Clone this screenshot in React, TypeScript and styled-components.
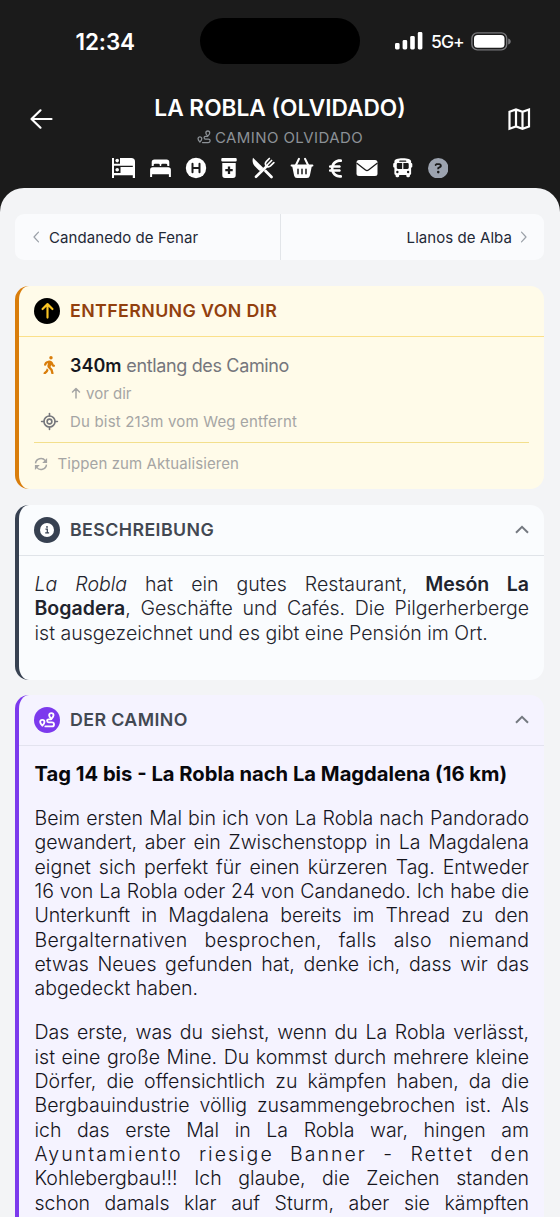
import React from "react";
import styled, { createGlobalStyle } from "styled-components";
import { FaEuroSign, FaBus, FaCircleQuestion, FaPersonWalking } from "react-icons/fa6";
import { LocateFixed } from "lucide-react";

const Global = createGlobalStyle`
  * { box-sizing: border-box; }
  html, body { margin: 0; background: #1b1b1b; overflow: hidden; }
  p, h1, h2, h3 { margin: 0; }
`;

const Screen = styled.div`
  width: 560px;
  height: 1217px;
  overflow: hidden;
  display: flex;
  flex-direction: column;
  background: #1b1b1b;
  font-family: Inter, "Liberation Sans", sans-serif;
  svg { display: block; flex: none; }
`;

const StatusBar = styled.div`
  display: grid;
  grid-template-columns: 200px 160px 200px;
  height: 83px;
  padding-top: 18px;
  color: #fff;
  flex: none;
`;

const Clock = styled.div`
  padding-left: 75.5px;
  height: 47px;
  line-height: 47px;
  font-size: 22.5px;
  font-weight: 580;
  letter-spacing: -0.1px;
`;

const Island = styled.div`
  height: 46px;
  border-radius: 23px;
  background: #000;
`;

const Signals = styled.div`
  display: flex;
  align-items: center;
  height: 46px;
  padding-left: 34px;
`;

const Network = styled.span`
  width: 40px;
  margin-left: 8px;
  font-size: 17.5px;
  font-weight: 500;
  line-height: 20px;
  padding-top: 2px;
  letter-spacing: -0.9px;
  white-space: nowrap;
`;

const Header = styled.header`
  display: grid;
  grid-template-columns: 80px 1fr 80px;
  height: 105px;
  flex: none;
  color: #fff;
`;

const HeaderButton = styled.button<{ $end?: boolean }>`
  display: flex;
  justify-content: ${(p) => (p.$end ? "flex-end" : "flex-start")};
  align-items: center;
  height: 71px;
  padding: 0 ${(p) => (p.$end ? "29px" : "0")} 0 ${(p) => (p.$end ? "0" : "28.5px")};
  border: 0;
  background: none;
  color: #fff;
`;

const Heading = styled.div`
  display: flex;
  flex-direction: column;
  align-items: center;
`;

const Title = styled.h1`
  margin-top: 10px;
  font-size: 22.7px;
  line-height: 30px;
  font-weight: 600;
  white-space: nowrap;
`;

const Subtitle = styled.div`
  display: flex;
  align-items: center;
  gap: 4px;
  margin-top: 5px;
  height: 18px;
  color: #8c9196;
  font-size: 15px;
  letter-spacing: 0.42px;
`;

const Services = styled.div`
  display: flex;
  align-items: center;
  gap: 15px;
  height: 24px;
  margin-top: 10px;
`;

const Service = styled.span<{ $width: number; $muted?: boolean }>`
  display: flex;
  justify-content: center;
  align-items: center;
  width: ${(p) => p.$width}px;
  height: 24px;
  color: ${(p) => (p.$muted ? "#9ca3af" : "#fff")};
`;

const Sheet = styled.main`
  flex: 1;
  min-height: 0;
  overflow: hidden;
  border-radius: 24px 24px 0 0;
  background: #f3f4f6;
  padding: 26px 16px 0 15px;
  display: flex;
  flex-direction: column;
`;

const StageNav = styled.nav`
  display: grid;
  grid-template-columns: 1fr 1fr;
  height: 46px;
  flex: none;
  border-radius: 9px;
  background: #fafbfd;
  overflow: hidden;
`;

const StageLink = styled.a<{ $next?: boolean }>`
  display: flex;
  align-items: center;
  justify-content: ${(p) => (p.$next ? "flex-end" : "flex-start")};
  gap: ${(p) => (p.$next ? "8px" : "9px")};
  padding: 0 ${(p) => (p.$next ? "16px" : "17px")} 0 17px;
  border-left: ${(p) => (p.$next ? "1px solid #e2e5e9" : "0")};
  color: #1f2937;
  font-size: 15px;
  letter-spacing: 0.07px;
  white-space: nowrap;
`;

const Card = styled.section<{ $accent: string; $bg: string; $height: number; $gap: number }>`
  flex: none;
  height: ${(p) => p.$height}px;
  margin-top: ${(p) => p.$gap}px;
  border-left: 4px solid ${(p) => p.$accent};
  border-radius: 14px;
  background: ${(p) => p.$bg};
`;

const CardHeader = styled.header<{ $line: string }>`
  display: flex;
  align-items: center;
  height: 51px;
  padding: 0 14px 1px 15px;
  border-bottom: 1px solid ${(p) => p.$line};
`;

const Badge = styled.span<{ $bg: string }>`
  display: flex;
  align-items: center;
  justify-content: center;
  width: 26px;
  height: 26px;
  border-radius: 50%;
  background: ${(p) => p.$bg};
  color: #fff;
`;

const CardTitle = styled.h2<{ $color?: string }>`
  flex: 1;
  margin-left: 10px;
  color: ${(p) => p.$color ?? "#424852"};
  font-size: 17.8px;
  font-weight: 600;
  letter-spacing: 0.4px;
  line-height: 22px;
  padding-top: 1px;
  white-space: nowrap;
`;

const Distance = styled.div`
  padding: 14px 15px 0;
`;

const Row = styled.div`
  display: grid;
  grid-template-columns: 30px 1fr;
  column-gap: 6px;
  align-items: center;
  justify-items: center;
  height: 28px;
`;

const RowText = styled.div<{ $size: number; $color: string; $track?: number }>`
  grid-column: 2;
  justify-self: start;
  display: flex;
  align-items: center;
  gap: 4px;
  color: ${(p) => p.$color};
  font-size: ${(p) => p.$size}px;
  letter-spacing: ${(p) => p.$track ?? 0}px;
  white-space: pre;
`;

const Strong = styled.strong`
  color: #15171e;
  font-weight: 600;
  letter-spacing: 0;
`;

const Refresh = styled.div`
  display: flex;
  align-items: center;
  gap: 9.5px;
  height: 42px;
  margin-top: 7px;
  border-top: 1px solid #f3df8c;
  color: #a5a5a4;
  font-size: 15px;
  letter-spacing: 0.09px;
`;

const Prose = styled.div<{ $color: string }>`
  padding: 16px 15px 0 15.5px;
  color: ${(p) => p.$color};
  font-size: 19.55px;
  font-weight: 300;
  line-height: 24.37px;
`;

const Line = styled.div<{ $last?: boolean; $track?: number }>`
  white-space: nowrap;
  margin-right: -${(p) => p.$track ?? 0}px;
  letter-spacing: ${(p) => p.$track ?? 0}px;
  text-align: justify;
  text-align-last: ${(p) => (p.$last ? "left" : "justify")};
  strong { font-weight: 640; }
`;

const Paragraph = styled.div`
  margin-top: 19.4px;
`;

const StageTitle = styled.h3`
  color: #08080c;
  font-size: 20.2px;
  font-weight: 680;
  line-height: 24.4px;
  white-space: nowrap;
`;

const Signal = () => (
  <svg width="29" height="18" viewBox="0 0 29 18" fill="#fff">
    <rect x="1" y="11" width="4.6" height="6.5" rx="1.4" />
    <rect x="8.6" y="8" width="4.6" height="9.5" rx="1.4" />
    <rect x="16.2" y="4" width="4.6" height="13.5" rx="1.4" />
    <rect x="23.8" y="0" width="4.6" height="17.5" rx="1.4" />
  </svg>
);

const Battery = () => (
  <svg width="40" height="19" viewBox="0 0 40 19">
    <rect x="0.9" y="0.9" width="34.8" height="17" rx="5.4" fill="none" stroke="#77777a" strokeWidth="1.4" />
    <rect x="3" y="3" width="30.5" height="12.8" rx="3.6" fill="#fff" />
    <path d="M37.2 6.5c1.8.5 2.5 1.6 2.5 3s-.7 2.500-2.500 3z" fill="#77777a" />
  </svg>
);

const BackArrow = () => (
  <svg width="24" height="24" viewBox="0 0 24 24" fill="none" stroke="currentColor" strokeWidth="2.200" strokeLinecap="round" strokeLinejoin="round">
    <path d="M11.500 3.300L2.500 12l9 8.700M2.700 12H22.500" />
  </svg>
);

const MapIcon = () => (
  <svg width="24" height="24" viewBox="0 0 24 24" fill="none" stroke="currentColor" strokeWidth="2.200">
    <path d="M2.500 4.800L9 2.500l6.500 2.300L22 2.500v17L15.500 21.800 9 19.500l-6.500 2.300zM9 2.500v17M15.500 4.800v17" />
  </svg>
);

const UpArrow = ({ size, color, weight = 2.6 }: { size: number; color: string; weight?: number }) => (
  <svg width={size} height={size} viewBox="0 0 24 24" fill="none" stroke={color} strokeWidth={weight} strokeLinecap="round" strokeLinejoin="round">
    <path d="M5 10L12 3l7 7M12 3.500V22" />
  </svg>
);

const Chevron = ({ dir }: { dir: "left" | "right" }) => (
  <svg width="8" height="12" viewBox="0 0 8 12" fill="none" stroke="#9aa0a8" strokeWidth="1.2" strokeLinecap="round" strokeLinejoin="round">
    <path d={dir === "left" ? "M6.500 1.200L2 6l4.500 4.800" : "M1.500 1.200L6 6l-4.500 4.800"} />
  </svg>
);

const Collapse = () => (
  <svg width="16" height="10" viewBox="0 0 16 10" fill="none" stroke="#747980" strokeWidth="2">
    <path d="M2 7.800l6-6 6 6" />
  </svg>
);

const Route = ({ size, weight }: { size: number; weight: number }) => (
  <svg width={size} height={size} viewBox="0 0 24 24" fill="none" stroke="currentColor" strokeWidth={weight} strokeLinecap="round" strokeLinejoin="round">
    <path d="M5 20.500C3 18.500 1.800 16.700 1.800 15a3.200 3.200 0 0 1 6.400 0c0 1.700-1.200 3.500-3.200 5.500z" />
    <path d="M18.500 10.500C16.200 8 15.200 6.700 15.200 5a3.300 3.300 0 0 1 6.600 0c0 1.700-1 3-3.300 5.500z" />
    <path d="M18 11h-3.500a2.300 2.300 0 0 0 0 4.600h5a3 3 0 0 1 0 6H9.500" />
  </svg>
);

const SyncIcon = () => (
  <svg width="14" height="14" viewBox="0 0 14 14" fill="none" stroke="currentColor" strokeWidth="1.500">
    <path d="M1.500 6.300A5.500 5.500 0 0 1 11.300 3.600M12.500 7.700A5.500 5.500 0 0 1 2.700 10.400" />
    <path d="M13.100 1v5H8.200zM.9 13V8h4.900z" fill="currentColor" stroke="none" />
  </svg>
);

const BunkBed = () => (
  <svg width="23" height="22" viewBox="0 0 23 22" fill="currentColor">
    <path d="M0 1h2v5.800h6V1h11.300A3.700 3.700 0 0 1 23 4.700V21h-2.200v-2.800H2V21H0z" />
    <path d="M2 8.800h18.800v1.300H8.500v5.800H2z" fill="#1b1b1b" />
    <circle cx="5.200" cy="3.600" r="1.800" />
    <circle cx="5.200" cy="12.700" r="1.800" />
  </svg>
);

const DoubleBed = () => (
  <svg width="21" height="20" viewBox="0 0 21 20" fill="currentColor">
    <path d="M1.700 8V4.200A2.700 2.700 0 0 1 4.400 1.500h12.200a2.700 2.700 0 0 1 2.700 2.700V8h-2V7a1.300 1.300 0 0 0-1.300-1.300h-3.500A1.300 1.300 0 0 0 11.200 7v1H9.800V7a1.300 1.300 0 0 0-1.300-1.300H5A1.300 1.300 0 0 0 3.700 7v1z" />
    <path d="M2.700 9.300h15.600a2.600 2.600 0 0 1 2.600 2.600V19h-2v-2.700H2.100V19h-2v-7.100a2.600 2.600 0 0 1 2.600-2.600z" />
  </svg>
);

const HospitalIcon = () => (
  <svg width="22" height="22" viewBox="0 0 22 22">
    <circle cx="11" cy="11" r="10.200" fill="#fff" />
    <path d="M7.500 6.700v8.600M14.500 6.700v8.600M7.500 11h7" stroke="#1b1b1b" strokeWidth="2" strokeLinecap="round" />
  </svg>
);

const PharmacyIcon = () => (
  <svg width="18" height="22" viewBox="0 0 18 22">
    <rect x="1.300" y="1" width="15.400" height="3.600" rx="1" fill="#fff" />
    <path d="M2.300 5.900h13.400v12.400a2.700 2.700 0 0 1-2.700 2.700H5a2.700 2.700 0 0 1-2.700-2.700z" fill="#fff" />
    <path d="M9 9.500v7.400M5.300 13.200h7.400" stroke="#1b1b1b" strokeWidth="2.300" />
  </svg>
);

const CutleryIcon = () => (
  <svg width="23" height="22" viewBox="0 0 23 22" fill="currentColor">
    <path d="M1 .8L11.400 11l-2.300 2.500c-.8.600-1.500.4-2.300-.3L2.400 8.800C.6 6.500.2 3.500 1 .8z" />
    <g fill="none" stroke="currentColor" strokeLinecap="round">
      <path d="M13.500 14l6 6" strokeWidth="2.800" />
      <path d="M4 19.800L15 9" strokeWidth="2.600" />
      <path d="M17.300 1.500l-3 3.100c-1.200 1.500-1 3.300.2 4.400 1.200 1 2.700 1 4-.1l3.300-3.200M19.600 3.500l-3.900 4" strokeWidth="1.700" />
    </g>
  </svg>
);

const BasketIcon = () => (
  <svg width="24" height="22" viewBox="0 0 24 22" fill="currentColor">
    <path d="M9 1.800L5.500 9M15 1.800L18.500 9" fill="none" stroke="currentColor" strokeWidth="2" strokeLinecap="round" />
    <path d="M1.700 7.500h20.600a1 1 0 0 1 .2 2l-.8.300-1.800 8.700a3 3 0 0 1-3 2.500H7.100a3 3 0 0 1-3-2.500L2.300 9.800l-.8-.3a1 1 0 0 1 .2-2z" />
    <path d="M8 12.300v4.500M12 12.300v4.500M16 12.300v4.500" stroke="#1b1b1b" strokeWidth="1.500" strokeLinecap="round" />
  </svg>
);

const MailIcon = () => (
  <svg width="22" height="18" viewBox="0 0 22 18">
    <rect x=".5" y="1" width="21" height="16" rx="2.500" fill="#fff" />
    <path d="M.5 4L9.500 11a2.500 2.500 0 0 0 3 0L21.500 4" fill="none" stroke="#1b1b1b" strokeWidth="1.300" />
  </svg>
);

const InfoIcon = () => (
  <svg width="16" height="16" viewBox="0 0 16 16">
    <circle cx="8" cy="8" r="7" fill="#fff" />
    <path d="M6.500 7.200h1.800v3.500M6.200 10.900h3.900" fill="none" stroke="#374151" strokeWidth="1.200" />
    <circle cx="8" cy="4.900" r=".9" fill="#374151" />
  </svg>
);

const firstParagraph = [
  "Beim ersten Mal bin ich von La Robla nach Pandorado",
  "gewandert, aber ein Zwischenstopp in La Magdalena",
  "eignet sich perfekt für einen kürzeren Tag. Entweder",
  "16 von La Robla oder 24 von Candanedo. Ich habe die",
  "Unterkunft in Magdalena bereits im Thread zu den",
  "Bergalternativen besprochen, falls also niemand",
  "etwas Neues gefunden hat, denke ich, dass wir das",
  "abgedeckt haben.",
];

const secondParagraph = [
  "Das erste, was du siehst, wenn du La Robla verlässt,",
  "ist eine große Mine. Du kommst durch mehrere kleine",
  "Dörfer, die offensichtlich zu kämpfen haben, da die",
  "Bergbauindustrie völlig zusammengebrochen ist. Als",
  "ich das erste Mal in La Robla war, hingen am",
  "Ayuntamiento riesige Banner - Rettet den",
  "Kohlebergbau!!! Ich glaube, die Zeichen standen",
  "schon damals klar auf Sturm, aber sie kämpften",
];

const tracking = (line: string) => {
  if (line.startsWith("Ayuntamiento")) return 2;
  if (line.startsWith("Bergalternativen")) return 0.3;
  return 0;
};

export default function App() {
  return (
    <Screen>
      <Global />
      <StatusBar>
        <Clock>12:34</Clock>
        <Island />
        <Signals>
          <Signal />
          <Network>5G+</Network>
          <Battery />
        </Signals>
      </StatusBar>
      <Header>
        <HeaderButton aria-label="Zurück"><BackArrow /></HeaderButton>
        <Heading>
          <Title>LA ROBLA (OLVIDADO)</Title>
          <Subtitle>
            <Route size={14} weight={2.200} />
            CAMINO OLVIDADO
          </Subtitle>
          <Services>
            <Service $width={23}><BunkBed /></Service>
            <Service $width={21}><DoubleBed /></Service>
            <Service $width={20}><HospitalIcon /></Service>
            <Service $width={16}><PharmacyIcon /></Service>
            <Service $width={22.5}><CutleryIcon /></Service>
            <Service $width={24}><BasketIcon /></Service>
            <Service $width={13}><FaEuroSign size={21} /></Service>
            <Service $width={21}><MailIcon /></Service>
            <Service $width={20}><FaBus size={21.500} /></Service>
            <Service $width={20.5} $muted><FaCircleQuestion size={20.500} /></Service>
          </Services>
        </Heading>
        <HeaderButton $end aria-label="Karte"><MapIcon /></HeaderButton>
      </Header>
      <Sheet>
        <StageNav>
          <StageLink><Chevron dir="left" />Candanedo de Fenar</StageLink>
          <StageLink $next>Llanos de Alba<Chevron dir="right" /></StageLink>
        </StageNav>
        <Card $accent="#d97d0b" $bg="#fffbe9" $height={203} $gap={26}>
          <CardHeader $line="#fbe08a">
            <Badge $bg="#000"><UpArrow size={17} color="#fbc524" weight={3} /></Badge>
            <CardTitle $color="#92400e">ENTFERNUNG VON DIR</CardTitle>
          </CardHeader>
          <Distance>
            <Row>
              <FaPersonWalking size={18.500} color="#d97d0b" />
              <RowText $size={18} $color="#75767c" $track={-0.35}><span><Strong>340m</Strong> entlang des Camino</span></RowText>
            </Row>
            <Row>
              <RowText $size={15} $color="#a5a5a4"><UpArrow size={12} color="#a5a5a4" weight={3} />vor dir</RowText>
            </Row>
            <Row>
              <LocateFixed size={19} color="#75767c" strokeWidth={2} />
              <RowText $size={15} $color="#a5a5a4" $track={0.18}>Du bist 213m vom Weg entfernt</RowText>
            </Row>
            <Refresh><SyncIcon />Tippen zum Aktualisieren</Refresh>
          </Distance>
        </Card>
        <Card $accent="#374151" $bg="#fafcfe" $height={175} $gap={16}>
          <CardHeader $line="#e0e4e9">
            <Badge $bg="#374151"><InfoIcon /></Badge>
            <CardTitle>BESCHREIBUNG</CardTitle>
            <Collapse />
          </CardHeader>
          <Prose $color="#1f242d">
            <Line><em>La Robla</em> hat ein gutes Restaurant, <strong>Mesón La</strong></Line>
            <Line><strong>Bogadera</strong>, Geschäfte und Cafés. Die Pilgerherberge</Line>
            <Line $last>ist ausgezeichnet und es gibt eine Pensión im Ort.</Line>
          </Prose>
        </Card>
        <Card $accent="#7c3aed" $bg="#f5f3ff" $height={600} $gap={15}>
          <CardHeader $line="#e3e3ef">
            <Badge $bg="#7c3aed"><Route size={16} weight={2.800} /></Badge>
            <CardTitle>DER CAMINO</CardTitle>
            <Collapse />
          </CardHeader>
          <Prose $color="#15151d">
            <StageTitle>Tag 14 bis - La Robla nach La Magdalena (16 km)</StageTitle>
            {[firstParagraph, secondParagraph].map((lines, n) => (
              <Paragraph key={n}>
                {lines.map((line) => (
                  <Line key={line} $last={line === "abgedeckt haben."} $track={tracking(line)}>{line}</Line>
                ))}
              </Paragraph>
            ))}
          </Prose>
        </Card>
      </Sheet>
    </Screen>
  );
}
